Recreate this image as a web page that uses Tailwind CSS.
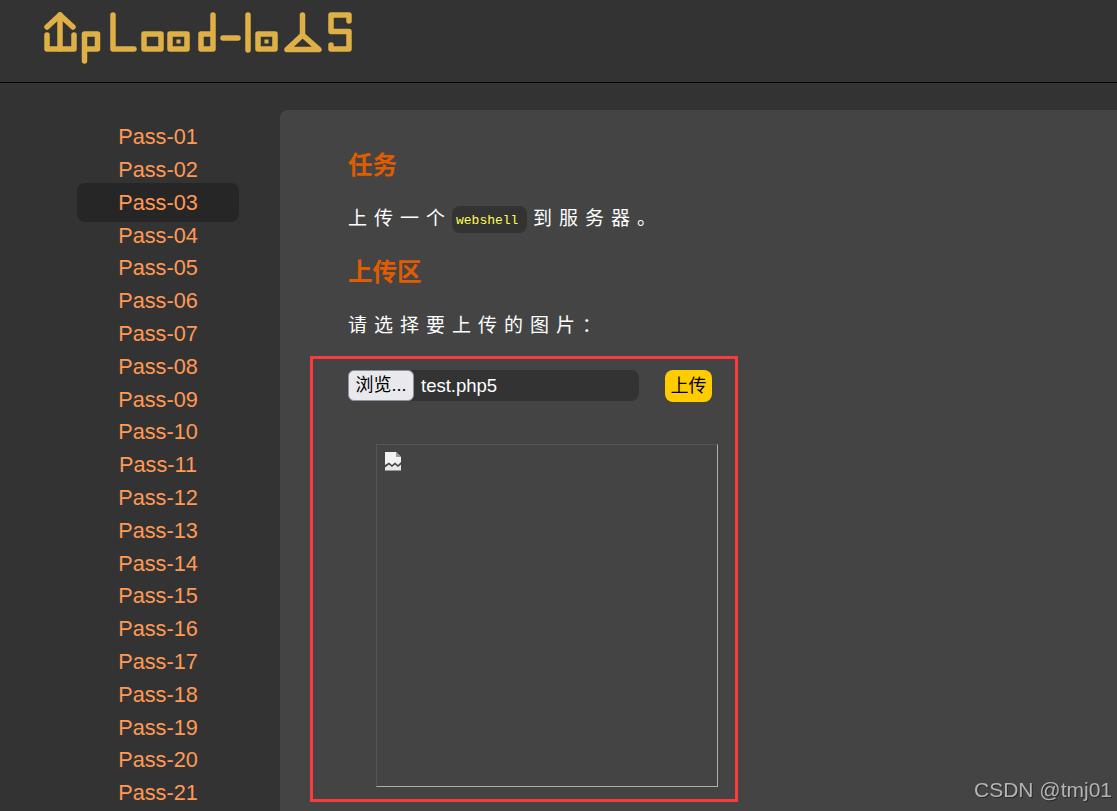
<!DOCTYPE html>
<html lang="zh-CN">
<head>
    <meta charset="UTF-8">
    <title>Upload-labs</title>
    <script src="https://cdn.jsdelivr.net/npm/@tailwindcss/browser@4"></script>
</head>
<body class="bg-[#333333] h-[811px] overflow-hidden font-['Liberation_Sans','Noto_Sans_CJK_SC',sans-serif]">
    <!-- Header -->
    <header class="h-[83px] border-b border-black pl-[43px] pt-[12px]">
        <svg width="310" height="54" viewBox="43 12 310 54" fill="none" stroke="#deb045" stroke-width="5.5" stroke-linecap="round" stroke-linejoin="round" role="img" aria-label="Upload-labs">
            <path d="M47 27 L60 15 L73 27"/>
            <path d="M60 15 V49"/>
            <path d="M47 35 V49 H74 V35"/>
            <path d="M84.5 61 V34 H97.5 V49 H84.5"/>
            <path d="M113 15 V49 H134"/>
            <rect x="144" y="34" width="17" height="15"/>
            <rect x="170" y="34" width="17" height="15"/>
            <rect x="176.5" y="39.5" width="4" height="4" fill="#deb045" stroke="none"/>
            <path d="M213 15 V49 H201 V34 H213"/>
            <path d="M223 38 H238"/>
            <path d="M248 15 V50"/>
            <rect x="258" y="34" width="17" height="15"/>
            <rect x="264.5" y="39.5" width="4" height="4" fill="#deb045" stroke="none"/>
            <path d="M302.5 15 V35"/>
            <path d="M302.5 35 L287 49.5 H319 Z"/>
            <path d="M349 21 V15 H331 V31.5 H349 V49 H331 V45"/>
        </svg>
    </header>

    <div class="flex pt-[27px]">
        <!-- Sidebar -->
        <nav class="w-[280px] shrink-0 pl-[77px] pr-[41px] pt-[11px] text-[21.7px] leading-[32.8px] text-[#ff9955] text-center">
            <ul>
                <li>Pass-01</li>
                <li>Pass-02</li>
                <li class="bg-[#262626] rounded-lg h-[39px] -mt-[4px] -mb-[2px] leading-[40px]">Pass-03</li>
                <li>Pass-04</li>
                <li>Pass-05</li>
                <li>Pass-06</li>
                <li>Pass-07</li>
                <li>Pass-08</li>
                <li>Pass-09</li>
                <li>Pass-10</li>
                <li>Pass-11</li>
                <li>Pass-12</li>
                <li>Pass-13</li>
                <li>Pass-14</li>
                <li>Pass-15</li>
                <li>Pass-16</li>
                <li>Pass-17</li>
                <li>Pass-18</li>
                <li>Pass-19</li>
                <li>Pass-20</li>
                <li>Pass-21</li>
            </ul>
        </nav>

        <!-- Main panel -->
        <main class="flex-1 h-[701px] bg-[#444444] rounded-tl-lg pl-[68px] pt-[40px]">
            <h2 class="text-[24.5px] leading-[32px] font-bold text-[#e05c00]">任务</h2>
            <p class="mt-[23px] flex items-center text-[19px] leading-[28px] tracking-[7px] text-white">
                <span>上传一个</span>
                <code class="mr-[6px] h-[27px] w-[75px] rounded-lg bg-[#333333] pl-[4px] font-['Liberation_Mono',monospace] text-[13px] leading-[29px] tracking-normal text-[#ffff55]">webshell</code>
                <span>到服务器。</span>
            </p>
            <h2 class="mt-[24px] text-[24.5px] leading-[32px] font-bold text-[#e05c00]">上传区</h2>
            <p class="mt-[23px] text-[19px] leading-[28px] tracking-[7px] text-white">请选择要上传的图片：</p>

            <form class="mt-[30px] flex items-start">
                <div class="w-[291px] h-[31px] rounded-lg bg-[#333333] flex items-center text-[18.5px] text-white">
                    <span class="w-[66px] h-[31px] rounded-md border border-[#8f8f9d] bg-[#e9e9ed] text-black text-center text-[18px] leading-[29px]">浏览...</span>
                    <span class="ml-[7px]">test.php5</span>
                </div>
                <button type="button" class="ml-[26px] w-[47px] h-[32px] rounded-lg bg-[#ffcc00] text-black text-[18px] leading-[32px]">上传</button>
            </form>

            <div class="ml-[28px] mt-[42px] w-[342px] h-[343px] border border-t-[#555555] border-l-[#555555] border-r-[#b0b0b0] border-b-[#b0b0b0] pl-[7px] pt-[6px]">
                <!-- broken image icon -->
                <svg width="18" height="20" viewBox="0 0 18 20">
                    <path d="M1 1 H12 L17 6 V11 L14 14 L11 11.5 L8 14 L5 11.5 L1 14 Z" fill="#f2f2f2"/>
                    <path d="M12 1 V6 H17" fill="#9a9a9a"/>
                    <path d="M1 19.5 V16.5 L5 13.5 L8 16 L11 13.5 L14 16 L17 13.5 V19.5 Z" fill="#e8e8e8"/>
                </svg>
            </div>
        </main>
    </div>

    <!-- Annotation box drawn over the page -->
    <div class="absolute left-[310px] top-[356px] w-[428px] h-[446px] border-[3px] border-[#fb3b3b] pointer-events-none"></div>
    <!-- Watermark -->
    <div class="absolute right-[5px] top-[776px] text-[21px] leading-[28px] text-[#b4b4b4] drop-shadow-[1px_1px_0_rgba(0,0,0,0.4)]">CSDN @tmj01</div>
</body>
</html>
